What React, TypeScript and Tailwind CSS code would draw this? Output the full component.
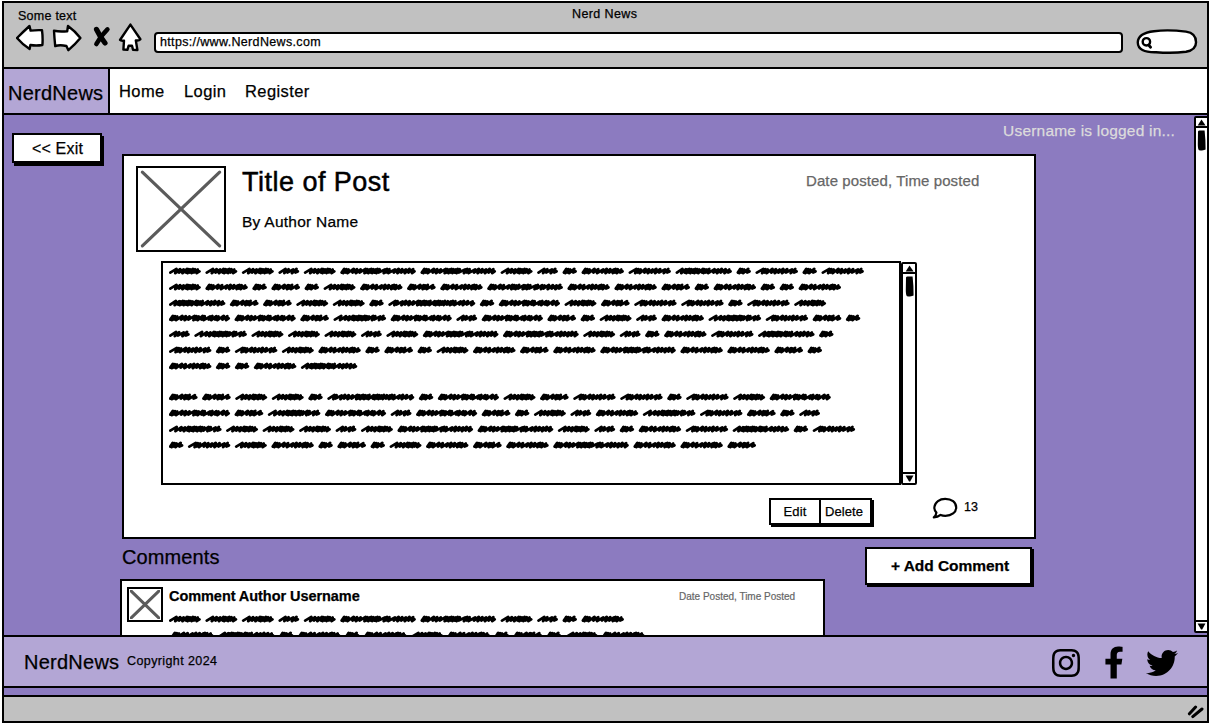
import React from "react";
import { FaFacebookF, FaInstagram, FaTwitter } from "react-icons/fa";

type WordKind = "A" | "B" | "C" | "D" | "E" | "F" | "G" | "H" | "I" | "J" | "K" | "L";

// Pen travel between strokes for every kind of scribbled word.
const WORDS: Record<WordKind, number[]> = {
  A: [5.4, 3.8, 3.6, 3.6, 2, 2, 2.2, 2.4, 2.8],
  B: [5, 3.2, 4.8, 3.6],
  C: [2, 2, 2.2, 4],
  D: [2, 2, 2.2, 4.6, 3.8, 5, 3.6, 3.6, 3.8, 2, 2.2, 3.2],
  E: [5.6, 2.4, 2.4, 4.4, 3.6, 3.6, 3.8, 4, 4.8, 3.4],
  F: [2, 2, 2.2, 4.8, 3.6, 2.2, 2.2, 5],
  G: [2, 2, 2.2, 4.6, 3.4, 3.6, 4.8, 2, 2, 2, 2, 2, 2, 2.2, 4.8, 2.4, 2.4, 5, 3.6, 3.6, 3.6, 3.6, 3.6],
  H: [4.6, 3.4, 2, 2, 2, 2, 2, 2, 2, 3.4, 2, 2.2, 2.4, 5, 3.6, 3.6, 4, 3.6],
  I: [2, 2, 2.2, 4.6, 3.6, 3.6, 5, 2.2, 2.2, 3.6, 2.4, 4.8, 2.6, 3.6, 2.4, 4.8, 3.6],
  J: [5.4, 4.8, 3.6, 3.6, 2, 2, 2, 2, 2, 2, 2, 2.2, 3.8, 2.4, 4.6, 3.2],
  K: [2, 2, 2.2, 4.6, 3.4, 5, 3.6, 2.2, 2.2, 2.4, 4.4, 2.2, 2.2, 2.4, 5, 2.4, 4, 2.6, 4, 4, 3.6, 3.6],
  L: [4.8, 2.4, 4.6, 3.4, 3.6, 4, 4.6, 2, 2, 2, 2, 2, 2.2, 4, 2, 2, 2, 2, 2.2, 3, 3, 2, 2.4, 4.8, 3.2, 4, 4.6],
};

const WIDTHS: Record<WordKind, number> = {
  A: 31.3, B: 20.2, C: 13.8, D: 41.8, E: 41.8, F: 28, G: 75, H: 55.8, I: 60.5, J: 52, K: 75, L: 86.4,
};

const GAP = 5.2;

function wordPath(kind: WordKind, left: number): string {
  const steps = WORDS[kind];
  const total = steps.reduce((a, b) => a + b, 0);
  const scale = (WIDTHS[kind] - 4.4) / total;
  let x = left + 1.2;
  let d = `M${x.toFixed(1)} 9.6`;
  steps.forEach((s, i) => {
    const wide = s > 3;
    const rise = 5.9 + (i % 3) * 0.3;
    const drop = 9.5 + ((i + 1) % 2) * 0.6;
    x += s * scale;
    d += `L${(x + (wide ? 1 : 0.6)).toFixed(1)} ${rise.toFixed(1)}`;
    d += `L${(x + (wide ? -0.2 : -0.5)).toFixed(1)} ${drop.toFixed(1)}`;
  });
  return `${d}L${(x + 2.3).toFixed(1)} 8.4`;
}

function ScribbleLine({ words }: { words: string }) {
  let x = 0;
  const paths = (words.split("") as WordKind[]).map((k) => {
    const d = wordPath(k, x);
    x += WIDTHS[k] + GAP;
    return d;
  });
  return (
    <svg className="block h-[15.8px] w-[720px] shrink-0" viewBox="0 0 720 15.8" fill="none" stroke="#000" strokeWidth="2.8" strokeLinecap="round" strokeLinejoin="round">
      {paths.map((d, i) => (
        <path key={i} d={d} />
      ))}
    </svg>
  );
}

const BODY = [
  "AAABAGGABCDEHCECE",
  "ADCFCADFDKDDFCDCCD",
  "HFFAACLCIAFEECEA",
  "IIFJIBIFCABDJEFC",
  "BJAAABAGGABCDEHC",
  "ECEADCFCADFDGDDFC",
  "DCCDH",
  "",
  "FFAACLCIAFEECEAI",
  "IFJIBIFCABDJEFCB",
  "JAAABAGGABCDEHCE",
  "CEADCFCADFDGDDF",
];

function Avatar({ className, stroke }: { className: string; stroke: number }) {
  return (
    <svg className={className} viewBox="0 0 100 100" preserveAspectRatio="none" fill="none" stroke="#5b5b5b" strokeWidth={stroke} strokeLinecap="round">
      <path vectorEffect="non-scaling-stroke" d="M4 4L96 96" />
      <path vectorEffect="non-scaling-stroke" d="M96 4L4 96" />
    </svg>
  );
}

function ScrollBar({ className }: { className: string }) {
  return (
    <div className={`flex flex-col items-center rounded-[2px] border-2 border-black bg-white ${className}`}>
      <div className="flex h-[10px] w-full shrink-0 items-center justify-center border-b-2 border-black">
        <svg className="h-[7px] w-[9px]" viewBox="0 0 8 6"><path d="M4 .4L7.6 5.6H.6z" /></svg>
      </div>
      <svg className="mt-[2px] h-[21px] w-[9px] shrink-0" viewBox="0 0 9 21">
        <path d="M1 1.4Q1.4.4 3 .6L7.6.4Q8.6 9 8.6 19.6Q7 20.8 2 20.2Q.8 19.6.8 14z" />
      </svg>
      <div className="grow" />
      <div className="flex h-[11px] w-full shrink-0 items-center justify-center border-t-2 border-black">
        <svg className="h-[7px] w-[9px]" viewBox="0 0 8 6"><path d="M.5.4H7.5L4.6 5.6H3.6z" /></svg>
      </div>
    </div>
  );
}

function BrowserBar() {
  return (
    <header className="flex h-[64px] shrink-0 bg-[#c1c1c1]">
      <div className="flex w-[150px] shrink-0 flex-col pl-[12px] pt-[6px]">
        <span className="pl-[2px] text-[12.5px] leading-[14px] tracking-[0.25px]">Some text</span>
        <svg className="-mt-[1px] h-[30px] w-[130px]" viewBox="16 22 130 30" fill="#fff" stroke="#000" strokeWidth="2.4" strokeLinejoin="round" strokeLinecap="round">
          <path d="M17 38Q24 31 29.5 26L30.6 30.6Q36 30 42 30.2Q43 38 42.4 45Q36 46 30.4 45L29.6 49Q23 45 17 38z" />
          <path d="M54 30.8Q60 32 67.2 31.2L68 26Q75 31 80.4 38Q75 44.500 68.4 50.2L66.4 46Q60 44.4 55.2 46Q54.4 38 54 30.8z" />
          <path fill="none" strokeWidth="5.2" d="M96.5 29.4Q99.5 36 105 43" />
          <path fill="none" strokeWidth="4.6" d="M107.4 29.4Q101 35.5 96.4 44" />
          <path d="M120 40L130.400 24.6L140.400 39.2Q139 41 135.800 40.4L137.400 50L133 49.8L132 45.8H128.600L127.400 49.8L123.400 49.6L124 40.6Q121 41 120 40z" />
        </svg>
      </div>
      <div className="flex grow flex-col">
        <span className="pl-[418px] pt-[4px] text-[12.5px] leading-[14px] tracking-[0.4px]">Nerd News</span>
        <div className="mt-[8px] flex items-center">
          <div className="flex h-[21px] w-[969px] items-center rounded-[4px] border-[2.5px] border-black bg-white pl-[4px] text-[12.5px] leading-none tracking-[0.34px]">
            https://www.NerdNews.com
          </div>
          <svg className="ml-[13px] h-[26px] w-[62px]" viewBox="0 0 62 26" fill="#fff" stroke="#000" strokeWidth="2.4" strokeLinecap="round">
            <path d="M18 2.2Q32 .4 50 2.6Q60 4 60 13Q60.4 21 50 22.8Q36 24.6 20 23.2Q2 23.6 1.8 13.4Q2 4 18 2.2z" />
            <circle cx="10.4" cy="12.8" r="3.7" />
            <path d="M12.6 16L14.6 18.2" strokeWidth="2.8" />
          </svg>
        </div>
      </div>
    </header>
  );
}

function NavBar() {
  return (
    <nav className="flex h-[48px] shrink-0 border-y-[2.5px] border-black bg-white">
      <div className="flex w-[106px] items-center border-r-[2.5px] border-black bg-[#b3a6d5] pl-[4px] pt-[3px] text-[20px] tracking-[0.25px]">NerdNews</div>
      <ul className="flex items-center pl-[9px] text-[16.5px] tracking-[0.4px]">
        <li className="w-[65px]">Home</li>
        <li className="w-[61px]">Login</li>
        <li>Register</li>
      </ul>
    </nav>
  );
}

function PostCard() {
  return (
    <article className="flex h-[385px] w-[914px] shrink-0 flex-col border-[2.5px] border-black bg-white">
      <div className="flex h-[105px] shrink-0 pl-[12px] pt-[10px]">
        <div className="h-[86px] w-[90px] border-[2.5px] border-black p-[1px]">
          <Avatar className="block h-full w-full" stroke={3.2} />
        </div>
        <div className="ml-[16px] flex w-[564px] flex-col">
          <h1 className="text-[27px] leading-[32px] tracking-[0.48px] [-webkit-text-stroke:0.5px_black]">Title of Post</h1>
          <p className="mt-[14px] text-[15.5px] leading-[20px] tracking-[0.25px]">By Author Name</p>
        </div>
        <time className="mt-[5px] text-[15px] leading-[20px] tracking-[0.1px] text-[#666] [-webkit-text-stroke:0.25px_#666]">Date posted, Time posted</time>
      </div>
      <div className="flex pl-[37px]">
        <div className="flex h-[224px] w-[740px] flex-col overflow-hidden border-[2.5px] border-black pl-[5.5px]">
          {BODY.map((line, i) => (
            <ScribbleLine key={i} words={line} />
          ))}
        </div>
        <ScrollBar className="mt-[1px] h-[223px] w-[16px]" />
      </div>
      <div className="flex pl-[645px] pt-[13px]">
        <div className="flex h-[27px] w-[103px] border-2 border-black bg-white text-[13px] shadow-[2px_2px_0_#000]">
          <button className="w-[50px] border-r-2 border-black tracking-[0.1px]">Edit</button>
          <button className="grow pr-[3px] tracking-[0.1px]">Delete</button>
        </div>
        <svg className="-mt-[1px] ml-[60px] h-[24px] w-[26px]" viewBox="0 0 26 24" fill="none" stroke="#000" strokeWidth="2.2" strokeLinejoin="round">
          <path d="M4.4 15.6C2.8 14 2.2 12 2.4 10C3 5 7.6 1.8 13.2 1.8C19.6 1.8 24.2 5.4 24.2 10.4C24.2 15.4 19.6 18.8 13.4 18.8C11.6 18.8 10 18.5 8.6 17.9C6.6 19.4 4.4 20.2 1.8 20.4C3.4 19 4.2 17.4 4.4 15.6z" />
        </svg>
        <span className="ml-[6px] text-[12.5px] leading-[18px]">13</span>
      </div>
    </article>
  );
}

function Comments() {
  return (
    <section className="flex shrink-0">
      <div className="-ml-[2px] flex w-[705px] flex-col">
        <h2 className="h-[40px] pl-[2px] pt-[6px] text-[20px] leading-[24px] tracking-[0.1px]">Comments</h2>
        <div className="flex h-[120px] border-[2.5px] border-black bg-white pl-[5px]">
          <div className="mt-[6px] h-[35px] w-[36px] shrink-0 border-[2.5px] border-black p-[1px]">
            <Avatar className="block h-full w-full" stroke={3} />
          </div>
          <div className="ml-[6px] flex w-[640px] shrink-0 flex-col overflow-hidden">
            <div className="flex h-[30px] shrink-0 pt-[5px]">
              <span className="w-[510px] shrink-0 text-[14.5px] font-bold leading-[20px] tracking-[-0.06px]">Comment Author Username</span>
              <time className="shrink-0 whitespace-nowrap text-[10px] leading-[21px] text-[#666] [-webkit-text-stroke:0.2px_#666]">Date Posted, Time Posted</time>
            </div>
            <ScribbleLine words="AAABAGGABCD" />
            <div className="pl-[2px]">
              <ScribbleLine words="DHCDCDADCFCAD" />
            </div>
          </div>
        </div>
      </div>
      <button className="ml-[40px] mt-[8px] h-[38px] w-[167px] border-[2.5px] border-black bg-white pl-[3px] text-[15.5px] font-bold tracking-[-0.05px] shadow-[2px_2px_0_#000]">
        + Add Comment
      </button>
    </section>
  );
}

export default function App() {
  return (
    <div className="h-[724px] w-[1210px] overflow-hidden bg-white pl-[2px] pt-[1px] font-['Liberation_Sans',sans-serif] text-black [-webkit-text-stroke:0.25px]">
      <div className="flex h-[722px] w-[1207px] flex-col border-2 border-black bg-[#8c7bc0]">
        <BrowserBar />
        <NavBar />
        <main className="flex h-[520px] shrink-0 overflow-hidden">
          <aside className="w-[118px] shrink-0 pl-[8px] pt-[18px]">
            <button className="h-[30px] w-[90px] border-[2.5px] border-black bg-white pl-[1px] pt-[1px] text-[16px] tracking-[0.2px] shadow-[2px_3px_0_#000]">&lt;&lt; Exit</button>
          </aside>
          <div className="flex w-[1072px] shrink-0 flex-col">
            <div className="flex h-[39px] shrink-0 justify-end pr-[19px] pt-[6px] text-[15.5px] leading-[20px] tracking-[0.2px] text-[#dcdcdc]">Username is logged in...</div>
            <PostCard />
            <Comments />
          </div>
          <ScrollBar className="-mr-[2px] mt-[1px] h-[517px] w-[15px]" />
        </main>
        <footer className="flex h-[53px] shrink-0 items-center border-y-[2.5px] border-black bg-[#b3a6d5] pl-[20px] pr-[29px]">
          <span className="w-[103px] text-[20px] tracking-[0.25px]">NerdNews</span>
          <span className="text-[12.5px] tracking-[0.4px]">Copyright 2024</span>
          <FaInstagram className="ml-auto mt-[3px] h-[32px] w-[32px]" />
          <FaFacebookF className="ml-[22px] mt-[2px] h-[33px] w-[20px]" />
          <FaTwitter className="ml-[22px] mt-[2px] h-[32px] w-[32px]" />
        </footer>
        <div className="h-[7px] shrink-0" />
        <div className="flex grow items-center justify-end border-t-[2.5px] border-black bg-[#c1c1c1] pr-[3px] pt-[4px]">
          <svg className="h-[15px] w-[17px]" viewBox="0 0 17 15" stroke="#000" strokeWidth="3" strokeLinecap="round">
            <path d="M2.4 9.8L8.6 3M5.8 12.6L15 5" />
          </svg>
        </div>
      </div>
    </div>
  );
}
